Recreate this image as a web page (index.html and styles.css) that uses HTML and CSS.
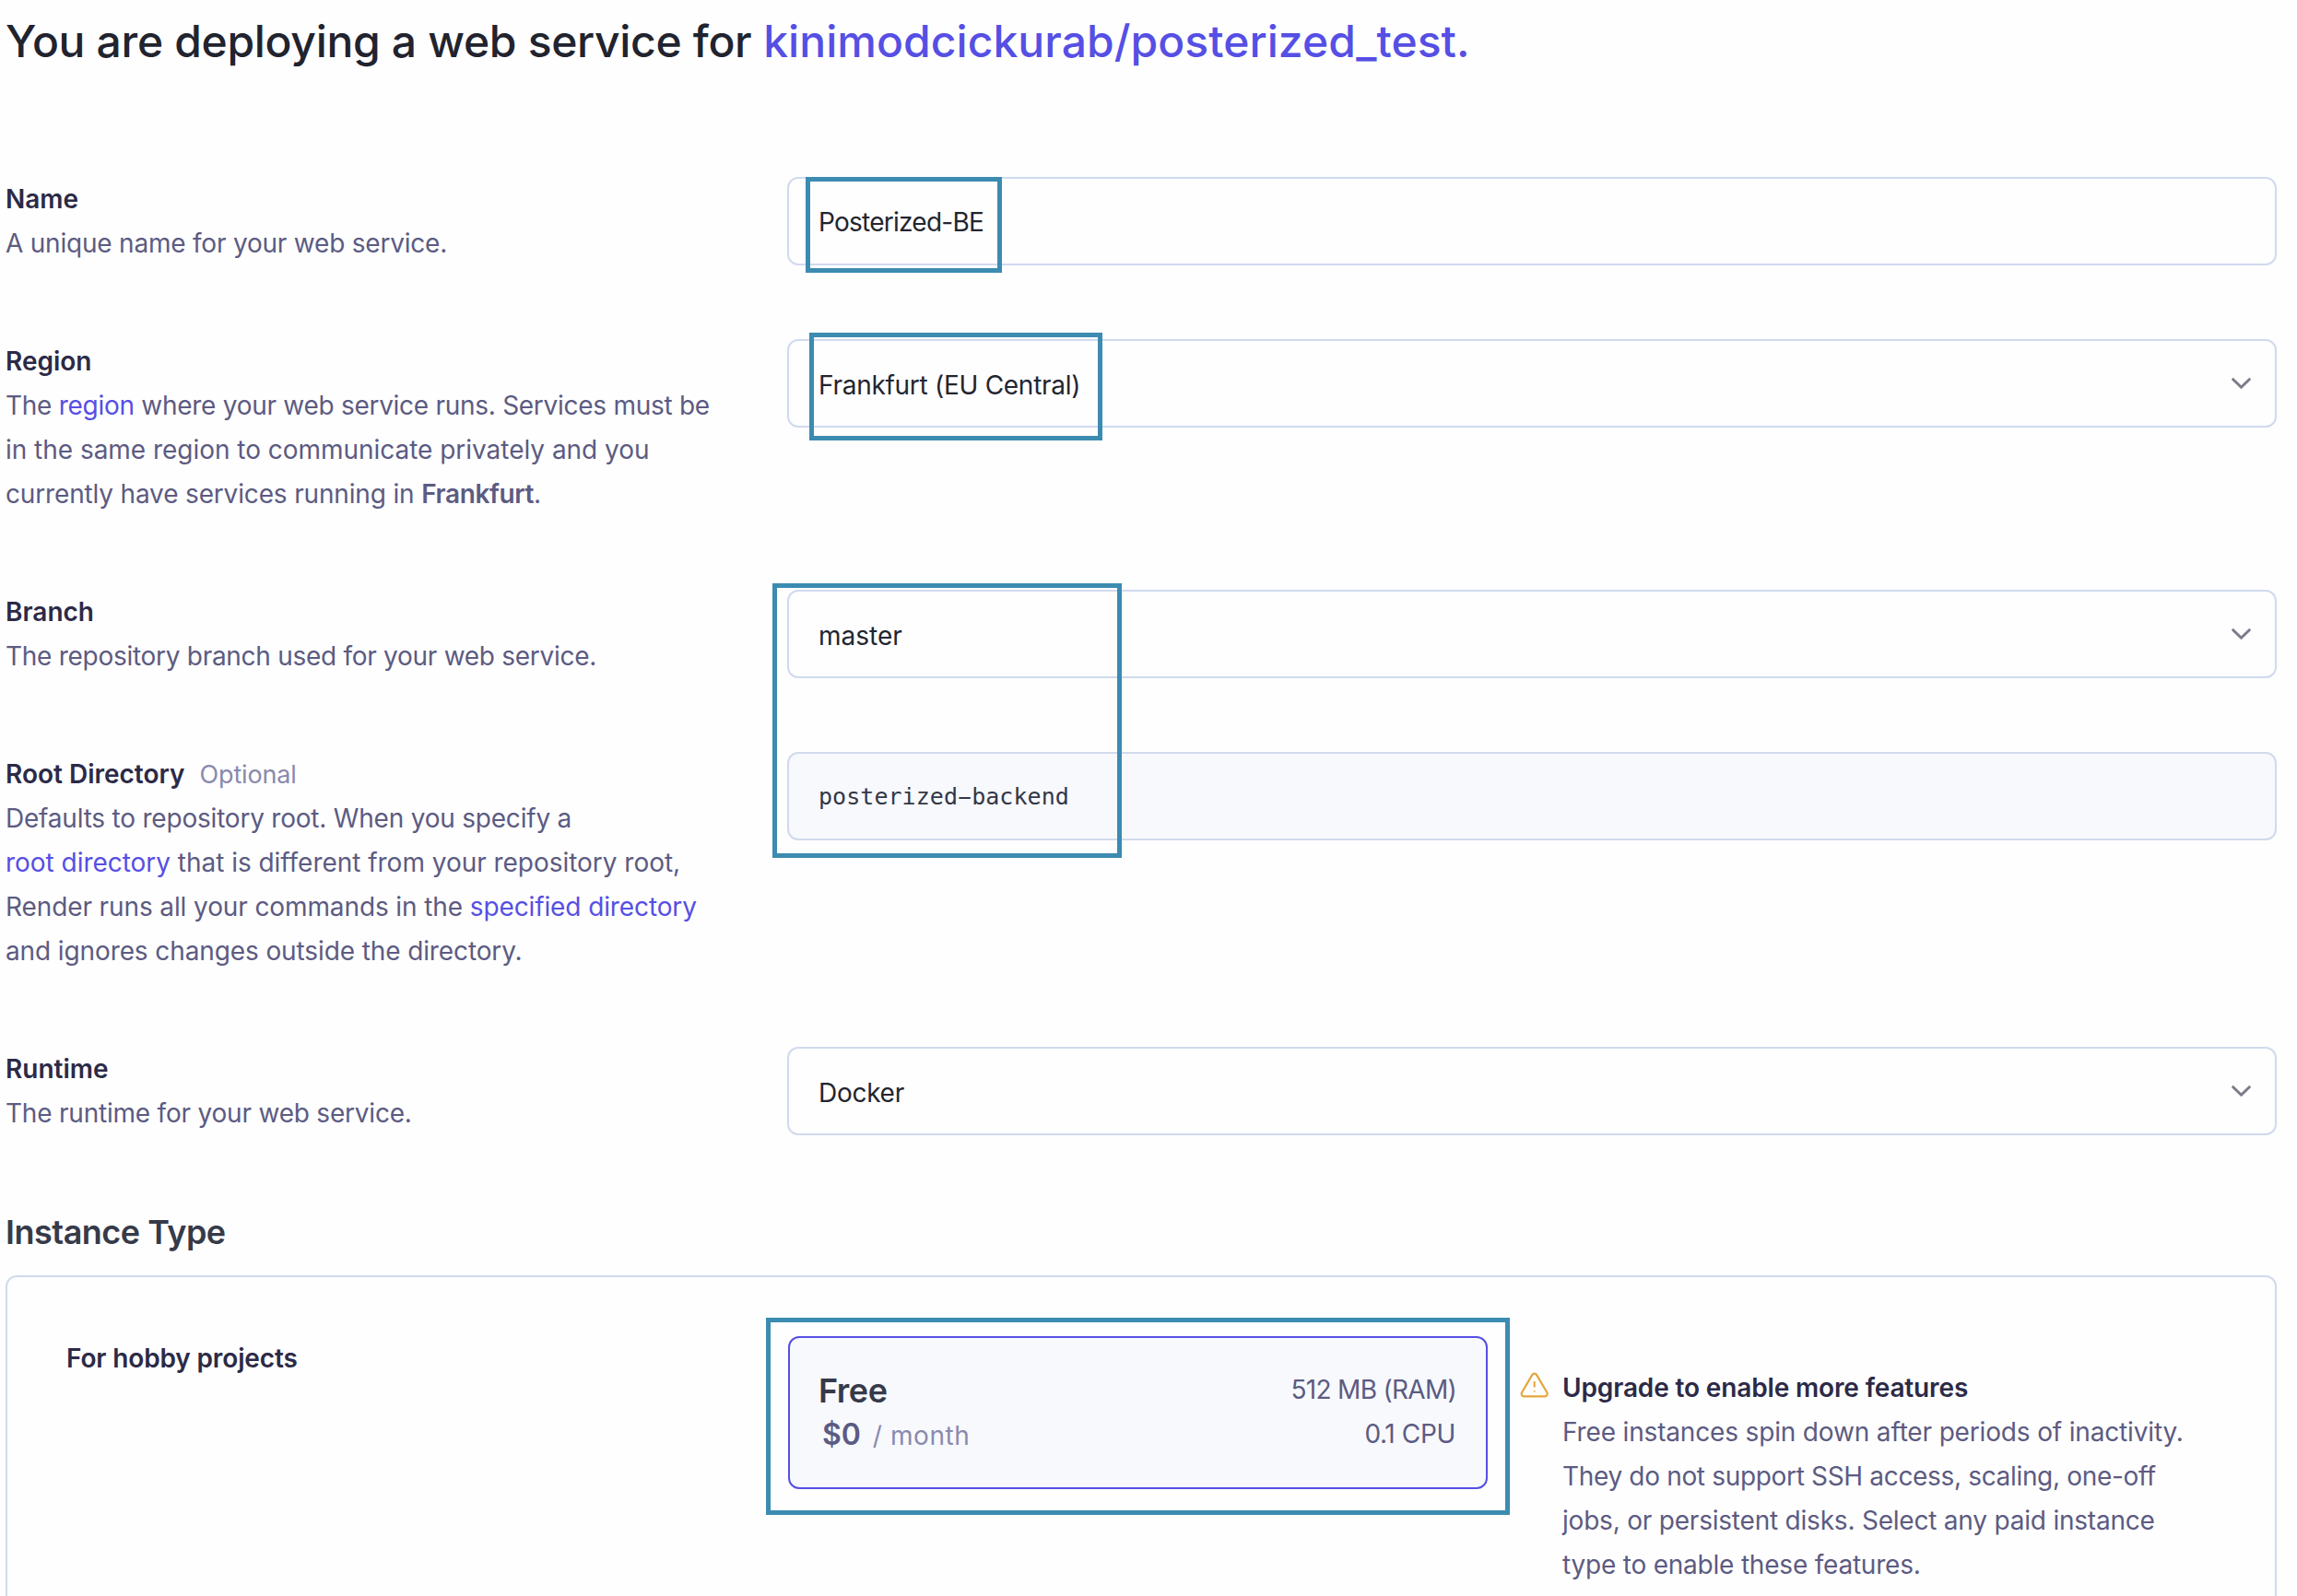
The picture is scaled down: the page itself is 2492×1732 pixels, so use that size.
FILE: index.html
```
<!DOCTYPE html>
<html lang="en">
<head>
<meta charset="utf-8">
<title>Deploy a web service</title>
<link rel="stylesheet" href="styles.css">
</head>
<body>
<main class="page">
  <h1 class="title"><span class="title-text">You are deploying a web service for</span> <a class="link repo">kinimodcickurab/posterized_test.</a></h1>

  <form class="form">
    <div class="row">
      <div class="info">
        <div class="label">Name</div>
        <div class="line defaults">A unique name for your web service.</div>
      </div>
      <div class="field field-input"><span class="value tighter">Posterized-BE</span></div>
    </div>

    <div class="row">
      <div class="info">
        <div class="label">Region</div>
        <div class="line tight">The <a class="link">region</a> where your web service runs. Services must be</div>
        <div class="line">in the same region to communicate privately and you</div>
        <div class="line snug">currently have services running in <b class="strong">Frankfurt</b>.</div>
      </div>
      <div class="field"><span class="value tight">Frankfurt (EU Central)</span>
        <svg class="chevron" viewBox="0 0 21 12"><path d="M1.7 1.7l8.8 8.6 8.8-8.6"/></svg></div>
    </div>

    <div class="row">
      <div class="info">
        <div class="label">Branch</div>
        <div class="line tight">The repository branch used for your web service.</div>
      </div>
      <div class="field"><span class="value">master</span>
        <svg class="chevron" viewBox="0 0 21 12"><path d="M1.7 1.7l8.8 8.6 8.8-8.6"/></svg></div>
    </div>

    <div class="row">
      <div class="info">
        <div class="label">Root Directory<span class="optional">Optional</span></div>
        <div class="line defaults">Defaults to repository root. When you specify a</div>
        <div class="line"><a class="link">root directory</a> that is different from your repository root,</div>
        <div class="line close">Render runs all your commands in the <a class="link">specified directory</a></div>
        <div class="line close">and ignores changes outside the directory.</div>
      </div>
      <div class="field field-code"><span class="value">posterized<span class="dash">-</span>backend</span></div>
    </div>

    <div class="row">
      <div class="info">
        <div class="label">Runtime</div>
        <div class="line defaults">The runtime for your web service.</div>
      </div>
      <div class="field"><span class="value tight">Docker</span>
        <svg class="chevron" viewBox="0 0 21 12"><path d="M1.7 1.7l8.8 8.6 8.8-8.6"/></svg></div>
    </div>
  </form>

  <h2 class="section-title">Instance Type</h2>
  <section class="panel">
    <div class="label long">For hobby projects</div>
    <div class="plan">
      <div class="plan-main">
        <div class="plan-name">Free</div>
        <div class="plan-price"><span class="amount">$0</span><span class="period">/ month</span></div>
      </div>
      <div class="plan-specs">
        <div class="ram">512 MB (RAM)</div>
        <div class="cpu">0.1 CPU</div>
      </div>
    </div>
    <aside class="notice">
      <svg class="warning" viewBox="0 0 32 28"><path d="M13.4 2.9L2 22.3a2.7 2.7 0 0 0 2.3 4h22.8a2.7 2.7 0 0 0 2.3-4L18 2.9a2.7 2.7 0 0 0-4.6 0z"/><path class="mark" d="M15.7 10v6.6M15.7 20.2v1.4"/></svg>
      <div>
        <div class="label long">Upgrade to enable more features</div>
        <div class="line snug">Free instances spin down after periods of inactivity.</div>
        <div class="line tighter-line">They do not support SSH access, scaling, one-off</div>
        <div class="line defaults">jobs, or persistent disks. Select any paid instance</div>
        <div class="line defaults">type to enable these features.</div>
      </div>
    </aside>
  </section>

  <div class="highlight highlight-name"></div>
  <div class="highlight highlight-region"></div>
  <div class="highlight highlight-source"></div>
  <div class="highlight highlight-plan"></div>
</main>
</body>
</html>
```
FILE: styles.css
```
* { box-sizing: border-box; }

body {
  margin: 0;
  background: #fefefe;
  font-family: "Inter", "Liberation Sans", sans-serif;
  font-size: 28px;
  line-height: 48px;
  color: #5c5b82;
}

.page {
  position: relative;
  height: 1732px;
  overflow: hidden;
  padding: 21px 22px 0 6px;
  white-space: nowrap;
}

.title {
  margin: 0 0 123px;
  font-size: 48px;
  font-weight: 500;
  line-height: 48px;
  color: #21232e;
}
.title-text { letter-spacing: -0.32px; }
.repo { letter-spacing: 0.06px; }
.link { color: #564fe4; }

.form {
  display: flex;
  flex-direction: column;
  gap: 80px;
}
.row {
  display: grid;
  grid-template-columns: 848px 1fr;
  align-items: start;
}

.label {
  height: 48px;
  font-weight: 600;
  letter-spacing: 0;
  color: #2c2a47;
}
.long { letter-spacing: -0.14px; }
.line { letter-spacing: -0.03px; }
.close { letter-spacing: -0.11px; }
.snug { letter-spacing: -0.16px; }
.defaults { letter-spacing: -0.21px; }
.tight { letter-spacing: -0.28px; }
.tighter { letter-spacing: -0.75px; }
.tighter-line { letter-spacing: -0.33px; }
.strong {
  font-weight: 600;
  letter-spacing: -0.4px;
}
.optional {
  margin-left: 16px;
  font-size: 27px;
  font-weight: 400;
  letter-spacing: -0.15px;
  color: #8a89ad;
}

.field {
  display: flex;
  align-items: center;
  justify-content: space-between;
  height: 96px;
  padding: 0 26px 0 32px;
  border: 2px solid #d0daee;
  border-radius: 12px;
  color: #23252f;
}
.value { padding-top: 4px; }
.field-input .value { padding-top: 2px; }
.field-code {
  background: #f7f9fd;
  font-family: "DejaVu Sans Mono", monospace;
  font-size: 25px;
  letter-spacing: 0.05px;
  color: #343746;
}
.field-code .value { padding-top: 1px; }
.dash { text-shadow: -3px 0 currentColor, 3px 0 currentColor; }
.chevron {
  width: 21px;
  height: 12px;
  fill: none;
  stroke: #7c7b8b;
  stroke-width: 3;
  stroke-linecap: round;
  stroke-linejoin: round;
}

.section-title {
  margin: 81px 0 23px;
  font-size: 36px;
  font-weight: 600;
  line-height: 48px;
  letter-spacing: -0.5px;
  color: #363a49;
}

.panel {
  display: grid;
  grid-template-columns: 783px 759px 1fr;
  align-items: start;
  height: 420px;
  padding: 64px 0 0 64px;
  border: 2px solid #d0daee;
  border-radius: 12px;
}

.plan {
  display: flex;
  justify-content: space-between;
  height: 166px;
  padding: 32px 32px 32px 31px;
  border: 2px solid #564fe4;
  border-radius: 12px;
  background: #f7f9fd;
}
.plan-name {
  padding-top: 2px;
  font-size: 36px;
  font-weight: 600;
  line-height: 47px;
  letter-spacing: -0.5px;
  color: #363a49;
}
.plan-price {
  display: flex;
  align-items: baseline;
  gap: 13px;
  padding-left: 4px;
}
.amount {
  font-size: 32px;
  font-weight: 600;
  letter-spacing: -0.1px;
}
.period {
  letter-spacing: 0.6px;
  color: #8a89ad;
}
.plan-specs { text-align: right; }
.ram { letter-spacing: -0.7px; }
.cpu {
  padding-right: 1px;
  letter-spacing: -0.35px;
}

.notice {
  display: flex;
  gap: 14px;
  padding: 32px 0 0 35px;
}
.warning {
  width: 32px;
  height: 28px;
  margin-top: 7px;
  fill: none;
  stroke: #e4a63c;
  stroke-width: 2.2;
  stroke-linejoin: round;
}
.mark { stroke-width: 2; }

/* Callout frames drawn over the form */
.highlight {
  position: absolute;
  border: 5px solid #3c8bb1;
}
.highlight-name { left: 874px; top: 192px; width: 213px; height: 104px; }
.highlight-region { left: 878px; top: 361px; width: 318px; height: 117px; }
.highlight-source { left: 838px; top: 633px; width: 379px; height: 298px; }
.highlight-plan { left: 831px; top: 1430px; width: 807px; height: 214px; }
```
